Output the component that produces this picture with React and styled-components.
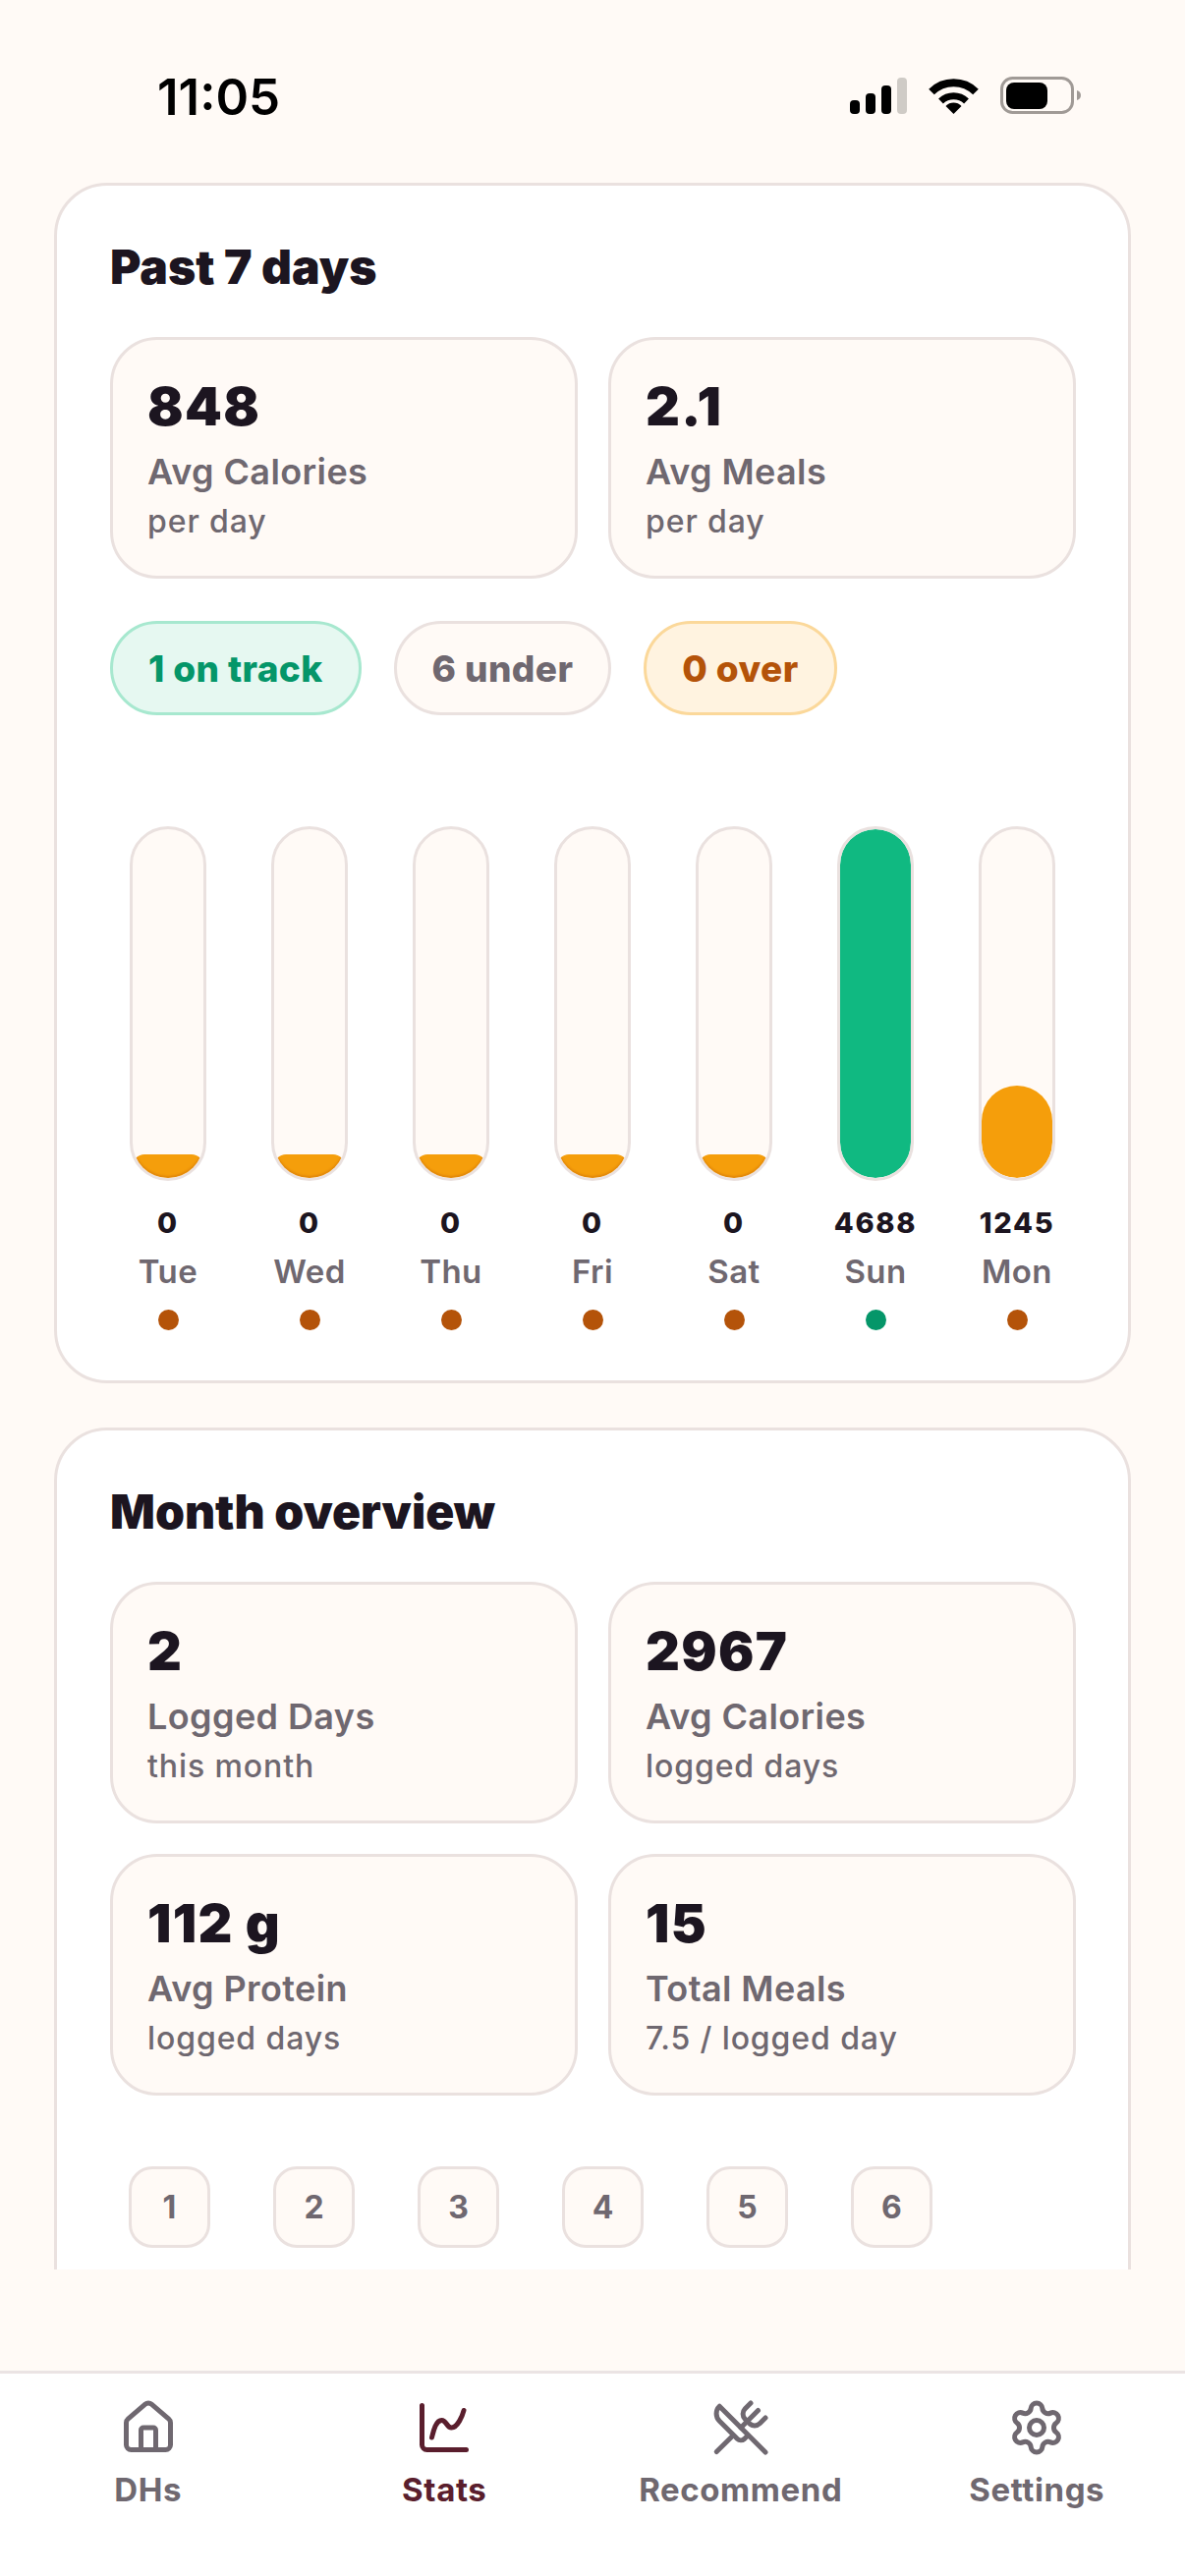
import React from "react";
import styled, { createGlobalStyle } from "styled-components";
import { House, ChartSpline, UtensilsCrossed, Settings } from "lucide-react";

const INK = "#1c1520";
const MUTED = "#6f6870";
const LINE = "#eae1df";
const CREAM = "#fffaf6";

const GlobalStyle = createGlobalStyle`
  html, body { margin: 0; padding: 0; background: ${CREAM}; }
  * { box-sizing: border-box; }
  body { font-family: Inter, "Noto Sans", sans-serif; }
`;

const Screen = styled.div`
  width: 1206px;
  height: 2622px;
  display: flex;
  flex-direction: column;
  background: ${CREAM};
  overflow: hidden;
`;

const StatusBar = styled.div`
  height: 186px;
  flex: none;
  padding: 67px 106px 0 160px;
  display: flex;
  justify-content: space-between;
  align-items: flex-start;
`;

const Clock = styled.div`
  font-size: 51px;
  line-height: 64px;
  font-weight: 600;
  color: #000;
`;

const StatusIcons = styled.div`
  display: flex;
  align-items: center;
  gap: 22px;
  margin-top: 11px;
`;

const Scroller = styled.div`
  flex: 1;
  min-height: 0;
  margin-bottom: 103px;
  padding: 0 55px;
  overflow: hidden;
  display: flex;
  flex-direction: column;
  gap: 45px;
`;

const Card = styled.section`
  flex: none;
  background: #fff;
  border: 3px solid ${LINE};
  border-radius: 54px;
  padding: 54px 54px 51px;
`;

const CardTitle = styled.h2`
  margin: 0 0 42px;
  font-size: 48px;
  line-height: 58px;
  font-weight: 900;
  color: ${INK};
`;

const StatGrid = styled.div`
  display: grid;
  grid-template-columns: 476px 476px;
  gap: 31px;
`;

const StatCard = styled.div`
  height: 246px;
  background: ${CREAM};
  border: 3px solid ${LINE};
  border-radius: 48px;
  padding: 36px 36px 0 35px;
`;

const StatValue = styled.div`
  font-size: 54px;
  line-height: 64px;
  font-weight: 900;
  letter-spacing: 1.3px;
  color: ${INK};
`;

const StatLabel = styled.div`
  margin-top: 12px;
  font-size: 36px;
  line-height: 44px;
  font-weight: 600;
  letter-spacing: 0.4px;
  color: ${MUTED};
`;

const StatSub = styled.div`
  margin-top: 9px;
  font-size: 32px;
  line-height: 40px;
  font-weight: 500;
  letter-spacing: 0.9px;
  color: ${MUTED};
`;

const Pills = styled.div`
  display: flex;
  gap: 33px;
  margin-top: 43px;
`;

const toneStyles = {
  good: { bg: "#e6f8f1", line: "#a7e8cf", text: "#059669" },
  plain: { bg: CREAM, line: LINE, text: MUTED },
  over: { bg: "#fff3e0", line: "#fbd89a", text: "#b45309" },
};

const Pill = styled.div`
  height: 96px;
  padding: 0 36px;
  display: flex;
  align-items: center;
  border-radius: 48px;
  border: 3px solid ${(p) => toneStyles[p.$tone].line};
  background: ${(p) => toneStyles[p.$tone].bg};
  color: ${(p) => toneStyles[p.$tone].text};
  font-size: 37px;
  font-weight: 800;
  letter-spacing: 0.4px;
`;

const Chart = styled.div`
  display: flex;
  justify-content: space-between;
  margin-top: 113px;
  padding: 0 20px;
`;

const DayColumn = styled.div`
  width: 78px;
  display: flex;
  flex-direction: column;
  align-items: center;
`;

const Track = styled.div`
  width: 78px;
  height: 361px;
  flex: none;
  display: flex;
  align-items: flex-end;
  background: ${CREAM};
  border: 3px solid ${LINE};
  border-radius: 39px;
  overflow: hidden;
`;

const Fill = styled.div`
  position: relative;
  width: 100%;
  border-radius: 36px;
  overflow: hidden;
  background: ${(p) => (p.$onTrack ? "#10b981" : "#f59e0b")};
`;

// the stub shown for empty days has a darker rim along the round end of the track
const FillRim = styled.div`
  position: absolute;
  left: 0;
  right: 0;
  bottom: 0;
  height: 72px;
  border-radius: 36px;
  box-shadow: inset 0 -2px 2px rgba(180, 83, 9, 0.3);
`;

const DayValue = styled.div`
  margin-top: 26px;
  font-size: 29px;
  line-height: 34px;
  font-weight: 800;
  letter-spacing: 1.7px;
  color: ${INK};
  white-space: nowrap;
`;

const DayName = styled.div`
  margin-top: 11px;
  font-size: 33px;
  line-height: 42px;
  font-weight: 600;
  letter-spacing: 0.4px;
  color: ${MUTED};
  white-space: nowrap;
`;

const DayDot = styled.div`
  margin-top: 18px;
  width: 21px;
  height: 21px;
  border-radius: 50%;
  background: ${(p) => (p.$onTrack ? "#059669" : "#b45309")};
`;

const WeekChips = styled.div`
  display: flex;
  gap: 64px;
  margin: 72px 0 140px;
  padding-left: 19px;
`;

const Chip = styled.div`
  width: 83px;
  height: 83px;
  display: flex;
  align-items: center;
  justify-content: center;
  background: ${CREAM};
  border: 3px solid ${LINE};
  border-radius: 24px;
  color: ${MUTED};
  font-size: 32px;
  font-weight: 700;
`;

const TabBar = styled.nav`
  flex: none;
  height: 209px;
  background: #fff;
  border-top: 3px solid #ebe4e4;
  padding-top: 25px;
  display: grid;
  grid-template-columns: repeat(4, 1fr);
  align-items: start;
`;

const Tab = styled.div`
  display: flex;
  flex-direction: column;
  align-items: center;
  color: ${(p) => (p.$active ? "#5a1e2d" : MUTED)};
`;

const TabLabel = styled.span`
  margin-top: 12px;
  font-size: 33px;
  line-height: 42px;
  font-weight: 700;
  letter-spacing: 0.6px;
`;

const week = [
  { day: "Tue", value: 0, h: 24 },
  { day: "Wed", value: 0, h: 24 },
  { day: "Thu", value: 0, h: 24 },
  { day: "Fri", value: 0, h: 24 },
  { day: "Sat", value: 0, h: 24 },
  { day: "Sun", value: 4688, h: 355, onTrack: true },
  { day: "Mon", value: 1245, h: 94 },
];

const month = [
  { value: "2", label: "Logged Days", sub: "this month" },
  { value: "2967", label: "Avg Calories", sub: "logged days" },
  { value: "112 g", label: "Avg Protein", sub: "logged days" },
  { value: "15", label: "Total Meals", sub: "7.5 / logged day" },
];

const tabs = [
  { label: "DHs", Icon: House },
  { label: "Stats", Icon: ChartSpline, active: true },
  { label: "Recommend", Icon: UtensilsCrossed },
  { label: "Settings", Icon: Settings },
];

function Stat({ value, label, sub }) {
  return (
    <StatCard>
      <StatValue>{value}</StatValue>
      <StatLabel>{label}</StatLabel>
      <StatSub>{sub}</StatSub>
    </StatCard>
  );
}

function SignalIcon() {
  return (
    <svg width="58" height="37" viewBox="0 0 58 37">
      <rect x="0" y="23" width="10" height="14" rx="4" />
      <rect x="16" y="16" width="10" height="21" rx="4" />
      <rect x="32" y="8" width="10" height="29" rx="4" />
      <rect x="48" y="0" width="10" height="37" rx="4" fill="#cfcbc6" />
    </svg>
  );
}

function WifiIcon() {
  return (
    <svg width="51" height="37" viewBox="0 0 51 37">
      <path d="M3 14.5a32 32 0 0 1 45 0" fill="none" stroke="#000" strokeWidth="8" />
      <path d="M12.5 24a19 19 0 0 1 26 0" fill="none" stroke="#000" strokeWidth="7" />
      <path d="M25.5 37 17.5 29a11 11 0 0 1 16 0z" />
    </svg>
  );
}

function BatteryIcon() {
  return (
    <svg width="82" height="38" viewBox="0 0 82 38">
      <rect x="1.5" y="1.5" width="72" height="35" rx="11" fill="none" stroke="#a09a96" strokeWidth="3" />
      <rect x="6" y="6" width="42" height="27" rx="8" />
      <path d="M78 14c2.500.5 4 2.500 4 5s-1.500 4.500-4 5z" fill="#a09a96" />
    </svg>
  );
}

export default function App() {
  return (
    <Screen>
      <GlobalStyle />
      <StatusBar>
        <Clock>11:05</Clock>
        <StatusIcons>
          <SignalIcon />
          <WifiIcon />
          <BatteryIcon />
        </StatusIcons>
      </StatusBar>

      <Scroller>
        <Card>
          <CardTitle>Past 7 days</CardTitle>
          <StatGrid>
            <Stat value="848" label="Avg Calories" sub="per day" />
            <Stat value="2.1" label="Avg Meals" sub="per day" />
          </StatGrid>
          <Pills>
            <Pill $tone="good">1 on track</Pill>
            <Pill $tone="plain">6 under</Pill>
            <Pill $tone="over">0 over</Pill>
          </Pills>
          <Chart>
            {week.map((d) => (
              <DayColumn key={d.day}>
                <Track>
                  <Fill $onTrack={d.onTrack} style={{ height: d.h }}>
                    {d.value === 0 && <FillRim />}
                  </Fill>
                </Track>
                <DayValue>{d.value}</DayValue>
                <DayName>{d.day}</DayName>
                <DayDot $onTrack={d.onTrack} />
              </DayColumn>
            ))}
          </Chart>
        </Card>

        <Card>
          <CardTitle>Month overview</CardTitle>
          <StatGrid>
            {month.map((m) => (
              <Stat key={m.label} {...m} />
            ))}
          </StatGrid>
          <WeekChips>
            {[1, 2, 3, 4, 5, 6].map((n) => (
              <Chip key={n}>{n}</Chip>
            ))}
          </WeekChips>
        </Card>
      </Scroller>

      <TabBar>
        {tabs.map(({ label, Icon, active }) => (
          <Tab key={label} $active={active}>
            <Icon size={60} strokeWidth={2} />
            <TabLabel>{label}</TabLabel>
          </Tab>
        ))}
      </TabBar>
    </Screen>
  );
}
